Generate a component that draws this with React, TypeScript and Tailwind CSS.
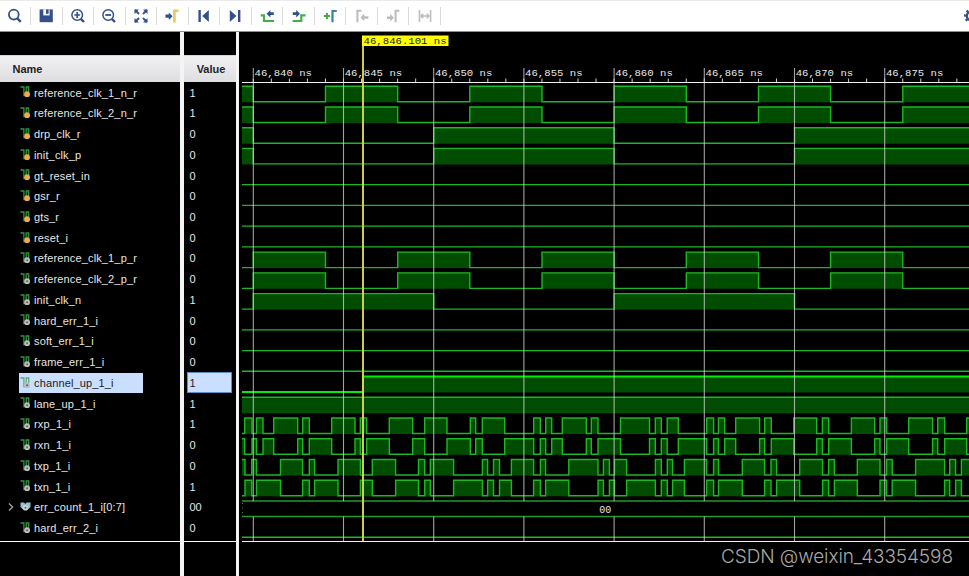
import React from 'react';

type Kind = 'reg' | 'wire' | 'bus';

interface Signal {
  name: string;
  value: string;
  kind: Kind;
  // x positions where the level toggles
  edges: number[];
  startHigh?: boolean;
}

const WAVE_LEFT = 242;
const WAVE_RIGHT = 970;
const ROW = 20.74;
const CURSOR = 363;

const CLK = [253.3, 325.5, 397.7, 469.8, 542, 614.1, 686.3, 758.5, 830.6, 902.8];
const SLOW_CLK = [253.3, 433.7, 614.1, 794.5];

const RX = [
  244.7, 252, 256.5, 263, 273.7, 297.7, 302.7, 309.3, 331.7, 355, 360.3, 366.7, 389.3, 412.7,
  424.7, 447, 470.3, 475.7, 482.3, 504.7, 533.7, 540.3, 545.7, 551.7, 562.3, 586.3, 591.3, 598,
  620.5, 649.5, 655.3, 661.3, 667.2, 678.3, 706.7, 713.6, 718.4, 724.7, 735.7, 759.6, 764.7,
  771.3, 793.7, 816.7, 822.4, 828.7, 851.4, 874.7, 880, 886.7, 908.7, 932.6, 937.7, 944.7, 966.7,
];

const TX = [
  245, 251.7, 256.5, 280.5, 302.6, 309.3, 314.6, 338, 360.4, 372.3, 395.6, 418.5, 424.7, 430.3,
  453.6, 482.4, 487.6, 493.5, 499.5, 511.4, 533.6, 540.4, 545.6, 568.8, 598, 603.4, 609.4, 614.5,
  626.6, 655.4, 661.3, 667.3, 672.6, 684.4, 706.6, 713.6, 718.5, 742.3, 764.6, 771, 776.6, 799.7,
  822.6, 828.6, 834.4, 857.3, 880, 886.6, 892.2, 915.6, 944.6, 949.7, 955.6, 961.4,
];

const SIGNALS: Signal[] = [
  { name: 'reference_clk_1_n_r', value: '1', kind: 'reg', edges: CLK, startHigh: true },
  { name: 'reference_clk_2_n_r', value: '1', kind: 'reg', edges: CLK, startHigh: true },
  { name: 'drp_clk_r', value: '0', kind: 'reg', edges: SLOW_CLK, startHigh: true },
  { name: 'init_clk_p', value: '0', kind: 'reg', edges: SLOW_CLK, startHigh: true },
  { name: 'gt_reset_in', value: '0', kind: 'reg', edges: [] },
  { name: 'gsr_r', value: '0', kind: 'reg', edges: [] },
  { name: 'gts_r', value: '0', kind: 'reg', edges: [] },
  { name: 'reset_i', value: '0', kind: 'reg', edges: [] },
  { name: 'reference_clk_1_p_r', value: '0', kind: 'wire', edges: CLK },
  { name: 'reference_clk_2_p_r', value: '0', kind: 'wire', edges: CLK },
  { name: 'init_clk_n', value: '1', kind: 'wire', edges: SLOW_CLK },
  { name: 'hard_err_1_i', value: '0', kind: 'wire', edges: [] },
  { name: 'soft_err_1_i', value: '0', kind: 'wire', edges: [] },
  { name: 'frame_err_1_i', value: '0', kind: 'wire', edges: [] },
  { name: 'channel_up_1_i', value: '1', kind: 'wire', edges: [CURSOR] },
  { name: 'lane_up_1_i', value: '1', kind: 'wire', edges: [], startHigh: true },
  { name: 'rxp_1_i', value: '1', kind: 'wire', edges: RX },
  { name: 'rxn_1_i', value: '0', kind: 'wire', edges: RX, startHigh: true },
  { name: 'txp_1_i', value: '0', kind: 'wire', edges: TX, startHigh: true },
  { name: 'txn_1_i', value: '1', kind: 'wire', edges: TX },
  { name: 'err_count_1_i[0:7]', value: '00', kind: 'bus', edges: [] },
  { name: 'hard_err_2_i', value: '0', kind: 'wire', edges: [] },
];

const SELECTED = 14;

const TIMES = ['46,840', '46,845', '46,850', '46,855', '46,860', '46,865', '46,870', '46,875'];

const BLUE = '#34508a';
const GREEN = '#43ae49';
const GRAY = '#bcbcbc';

const TOOLS: React.ReactNode[] = [
  <g fill="none" stroke={BLUE}>
    <circle cx="6.8" cy="6.6" r="4.9" strokeWidth="1.8" />
    <path d="M10.3 10.3L13.8 13.8" strokeWidth="2.4" />
  </g>,
  <g>
    <path d="M1.6 1.4H14.8V14.2H1.6Z" fill={BLUE} />
    <path d="M5.3 1.4H11.6V7.4H5.3Z" fill="#fff" />
    <path d="M8 1.4H10.6V5.8H8Z" fill={BLUE} />
  </g>,
  <g fill="none" stroke={BLUE}>
    <circle cx="7.2" cy="7" r="5.3" strokeWidth="1.5" />
    <path d="M4.3 7H10.1M7.2 4.1V9.9" strokeWidth="1.7" />
    <path d="M10.8 10.8L14 14" strokeWidth="2.4" />
  </g>,
  <g fill="none" stroke={BLUE}>
    <circle cx="7.2" cy="7" r="5.3" strokeWidth="1.5" />
    <path d="M4.3 7H10.1" strokeWidth="1.8" />
    <path d="M10.8 10.8L14 14" strokeWidth="2.4" />
  </g>,
  <g fill={BLUE} stroke={BLUE} strokeWidth="1.8">
    <path d="M2 2L6 6M14 2L10 6M2 14L6 10M14 14L10 10" />
    <path
      d="M1.5 1.5H6L1.5 6ZM14.5 1.5H10L14.5 6ZM1.5 14.5H6L1.5 10ZM14.5 14.5H10L14.5 10Z"
      stroke="none"
    />
  </g>,
  <g>
    <path d="M1.5 6.6H4.8V4.4L8.6 8.2L4.8 12V9.8H1.5Z" fill={BLUE} />
    <path d="M10.4 14.5V2.8H14.6" fill="none" stroke="#e5c95c" strokeWidth="2.6" />
  </g>,
  <g fill={BLUE}>
    <path d="M2.4 2H4.8V14H2.4Z" />
    <path d="M12.8 2V14L6.2 8Z" />
  </g>,
  <g fill={BLUE}>
    <path d="M2.8 2V14L9.4 8Z" />
    <path d="M11 2H13.4V14H11Z" />
  </g>,
  <g>
    <path d="M1.8 7.3H5V13H15.2" fill="none" stroke={GREEN} strokeWidth="2.2" />
    <path d="M7.6 5.7L11.4 1.9V4.3H14.8V7.1H11.4V9.5Z" fill={BLUE} />
  </g>,
  <g>
    <path d="M1.6 13H10.3V7.3H14.6" fill="none" stroke={GREEN} strokeWidth="2.2" />
    <path d="M9 5.7L5.2 1.9V4.3H1.8V7.1H5.2V9.5Z" fill={BLUE} />
  </g>,
  <g fill="none">
    <path d="M1.8 8H8M4.9 4.9V11.1" stroke={GREEN} strokeWidth="2.1" />
    <path d="M10.5 14.2V3H14.8" stroke="#3b80a5" strokeWidth="2.2" />
  </g>,
  <g>
    <path d="M3.4 14.2V2.8H7.5" fill="none" stroke={GRAY} strokeWidth="2" />
    <path d="M6.4 9.5L10.2 5.8V8.2H14.4V10.8H10.2V13.2Z" fill={GRAY} />
  </g>,
  <g>
    <path d="M10.6 14.2V2.8H14.4" fill="none" stroke={GRAY} strokeWidth="2" />
    <path d="M9 9.8L5.2 6.1V8.5H2V11.1H5.2V13.5Z" fill={GRAY} />
  </g>,
  <g fill="none" stroke={GRAY} strokeWidth="1.5">
    <path d="M2.5 2V14M13.6 2V14" />
    <path d="M4 8H12M6.2 5.7L4 8L6.2 10.3M9.8 5.7L12 8L9.8 10.3" />
  </g>,
];

const Toolbar: React.FC = () => (
  <div className="flex h-[32px] shrink-0 items-center justify-between overflow-hidden border-t border-b border-t-[#ebebeb] border-b-[#8f8f8f] bg-white">
    <div className="-ml-[0.5px] flex">
      {TOOLS.map((tool, i) => (
        <div
          key={i}
          className="flex h-[18px] w-[31.54px] shrink-0 items-center justify-center border-r border-[#dadada]"
        >
          <svg width="16" height="16" viewBox="0 0 16 16">
            {tool}
          </svg>
        </div>
      ))}
    </div>
    <svg width="16" height="16" viewBox="0 0 16 16" className="-mr-[9.5px] shrink-0">
      <circle cx="8" cy="8" r="4.2" fill="none" stroke={BLUE} strokeWidth="2.4" />
      <circle
        cx="8"
        cy="8"
        r="6"
        fill="none"
        stroke={BLUE}
        strokeWidth="2"
        strokeDasharray="2.36 2.36"
        strokeDashoffset="1.18"
      />
    </svg>
  </div>
);

const SignalIcon: React.FC<{ kind: Kind; selected: boolean }> = ({ kind, selected }) => {
  if (kind === 'bus') {
    return (
      <svg width="12" height="12" viewBox="0 0 12 12" className="shrink-0">
        <path d="M.5 1.5H4L5.3 3L6.6 1.5H10.5V6L8.5 8H2.5L.5 6Z" fill="#93bfd0" />
        <circle cx="5.5" cy="6.8" r="2.8" fill="#cfcfcf" />
        <circle cx="5.5" cy="6.8" r="1" fill="#666" />
      </svg>
    );
  }
  return (
    <svg width="12" height="12" viewBox="0 0 12 12" className="shrink-0">
      <path
        d="M.5 1H3.9V9.6H6.2V1H8.7V6"
        fill="none"
        stroke={selected ? '#5fae74' : '#33923f'}
        strokeWidth="1.3"
      />
      {kind === 'reg' ? (
        <circle cx="7.1" cy="8.2" r="2.9" fill="#f0ab48" />
      ) : (
        <>
          <circle cx="7.1" cy="8.2" r="2.9" fill="#bdbdbd" />
          <circle cx="7.1" cy="8.2" r="1" fill="#606060" />
        </>
      )}
    </svg>
  );
};

const headerClass =
  'flex h-[27px] shrink-0 items-center border-t border-[#d5d5d8] bg-linear-to-b from-[#f1f1f3] to-[#dedee2] text-[11px] font-bold text-[#222]';

const NamePanel: React.FC = () => (
  <div className="flex w-[180px] shrink-0 flex-col pt-[23px]">
    <div className={`${headerClass} pl-[12.5px]`}>Name</div>
    <div className="border-b border-white pb-[3px]">
      {SIGNALS.map((s, i) => (
        <div key={s.name} className="flex h-[20.74px] items-center">
          <div className="flex w-[19px] shrink-0 justify-center">
            {s.kind === 'bus' && (
              <svg width="6" height="10" viewBox="0 0 6 10" className="ml-[3px]">
                <path d="M1 1.5L4.7 5L1 8.5" fill="none" stroke="#aaa" strokeWidth="1.2" />
              </svg>
            )}
          </div>
          <div
            className={`flex h-[20px] items-center gap-[2px] pl-px ${
              i === SELECTED ? 'w-[124px] bg-[#cadeff] text-[#222]' : 'text-[#e6e6e6]'
            }`}
          >
            <SignalIcon kind={s.kind} selected={i === SELECTED} />
            <span className="pt-[1.5px] tracking-[0.14px] whitespace-nowrap">{s.name}</span>
          </div>
        </div>
      ))}
    </div>
  </div>
);

const ValuePanel: React.FC = () => (
  <div className="flex w-[52px] shrink-0 flex-col pt-[23px]">
    <div className={`${headerClass} justify-center pl-[3px]`}>Value</div>
    <div className="border-b border-white pb-[3px]">
      {SIGNALS.map((s, i) => (
        <div key={s.name} className="flex h-[20.74px] items-center pl-[3.5px]">
          <div
            className={`flex h-[20.7px] items-center border pl-[1.5px] ${
              i === SELECTED
                ? 'w-[45px] border-[#5b8cc4] bg-[#cadeff] text-[#222]'
                : 'border-transparent text-[#e6e6e6]'
            }`}
          >
            <span className="pt-[1.5px]">{s.value}</span>
          </div>
        </div>
      ))}
    </div>
  </div>
);

const Wave: React.FC<{ signal: Signal; index: number }> = ({ signal, index }) => {
  const high = 86.2 + ROW * index;
  const low = 101.7 + ROW * index;

  if (signal.kind === 'bus') {
    return (
      <g>
        <path
          d={`M${WAVE_LEFT} ${high}H${WAVE_RIGHT}M${WAVE_LEFT} ${low}H${WAVE_RIGHT}`}
          stroke="#1f9a28"
          strokeWidth="1.3"
        />
        <path d={`M242.5 ${high + 2}V${low}`} stroke="#1f9a28" strokeDasharray="1 3.5" />
        <text x="599.3" y={high + 11.6} fill="#e8e8e8" fontSize="10">
          00
        </text>
      </g>
    );
  }

  const selected = index === SELECTED;
  const stops = [WAVE_LEFT, ...signal.edges, WAVE_RIGHT];
  let line = '';
  let fill = '';
  let level = Boolean(signal.startHigh);
  for (let i = 0; i < stops.length - 1; i++) {
    const y = level ? high : low;
    line += `${i === 0 ? 'M' : 'L'}${stops[i]} ${y}H${stops[i + 1]}`;
    if (level) {
      fill += `M${stops[i]} ${high}H${stops[i + 1]}V${low + 0.5}H${stops[i]}Z`;
    }
    level = !level;
  }

  return (
    <g>
      <path d={fill} fill="#004c00" />
      <path
        d={line}
        fill="none"
        stroke={selected ? '#00ee00' : '#1cb823'}
        strokeWidth={selected ? 2 : 1.4}
      />
    </g>
  );
};

const WavePanel: React.FC = () => {
  const ticks = Array.from({ length: 40 }, (_, i) => 253.3 + i * 18.04);
  const grid = TIMES.map((_, i) => 253.3 + i * 90.2);
  const top = 86.2 + ROW * 20;

  return (
    <svg
      viewBox="239 32 730 544"
      width="730"
      height="544"
      className="block font-['Liberation_Mono','Courier_New',monospace]"
    >
      {SIGNALS.map((s, i) => (
        <Wave key={s.name} signal={s} index={i} />
      ))}

      {grid.map((x, i) => (
        <g key={x}>
          <path
            d={`M${x} 68V${top}M${x} ${top + 15.5}V541`}
            stroke="#d8d8d8"
            strokeOpacity="0.75"
            strokeWidth="1.1"
          />
          <text
            x={x + 1.2}
            y="76"
            fill="#e8e8e8"
            fontSize="9.4"
            textLength="57.5"
            lengthAdjust="spacingAndGlyphs"
          >
            {TIMES[i]} ns
          </text>
        </g>
      ))}
      <path d={ticks.map((x) => `M${x} 78.5V82`).join('')} stroke="#d0d0d0" />
      <path d="M242 82.5H970M242 541.5H970" stroke="#f2f2f2" />

      {/* main cursor */}
      <path d={`M${CURSOR} 46V541`} stroke="#d9d94e" strokeWidth="1.9" />
      <rect x="362" y="35.5" width="86.5" height="10.5" fill="#ffff00" />
      <text
        x="363.6"
        y="44.2"
        fill="#222"
        fontSize="9.4"
        textLength="83"
        lengthAdjust="spacingAndGlyphs"
      >
        46,846.101 ns
      </text>

      <text
        x="721"
        y="563"
        fill="#a9a9a9"
        fontSize="19"
        textLength="232"
        className="font-['Inter','Liberation_Sans',sans-serif] font-light"
      >
        CSDN @weixin_43354598
      </text>
    </svg>
  );
};

export default function App() {
  return (
    <div className="flex h-[576px] w-[969px] flex-col overflow-hidden bg-black font-['Liberation_Sans',Arial,sans-serif] text-[11px] leading-none">
      <Toolbar />
      <div className="flex min-h-0 flex-1">
        <NamePanel />
        <div className="w-[3.5px] shrink-0 bg-[#f4f4f4]" />
        <ValuePanel />
        <div className="w-[3.5px] shrink-0 bg-[#f4f4f4]" />
        <div className="min-w-0 flex-1 overflow-hidden">
          <WavePanel />
        </div>
      </div>
    </div>
  );
}
